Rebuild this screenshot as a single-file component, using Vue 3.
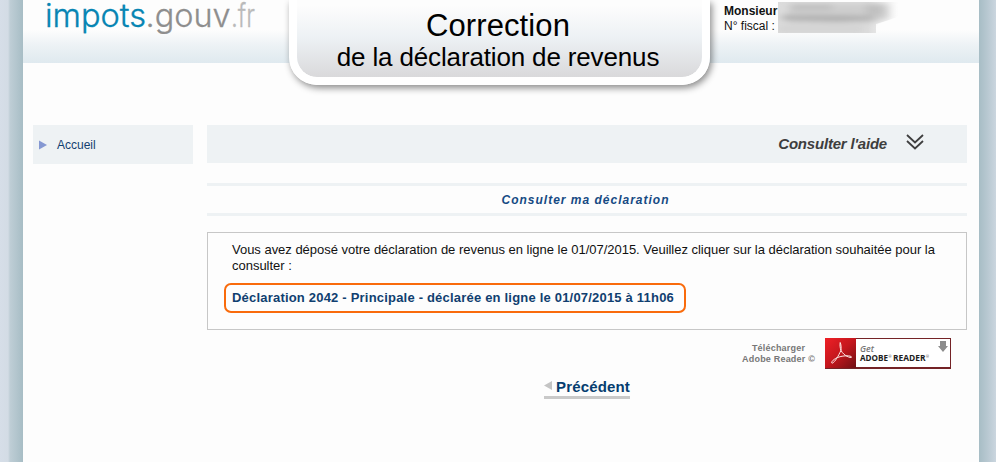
<script setup>
const title = { main: 'Correction', sub: 'de la déclaration de revenus' }
</script>

<template>
  <div class="backdrop">
    <div class="page">
      <header class="header">
        <svg class="logo" width="215" height="40" viewBox="0 0 215 40" role="img" aria-label="impots.gouv.fr">
          <g font-family="Inter, sans-serif" font-size="32" font-weight="300">
            <text x="-1" y="27" textLength="101" lengthAdjust="spacingAndGlyphs" fill="#0785b3" stroke="#0785b3" stroke-width=".35">impots</text>
            <text x="99.5" y="27" textLength="85" lengthAdjust="spacingAndGlyphs" fill="#8e8e8e" stroke="#8e8e8e" stroke-width=".3">.gouv</text>
            <text x="185" y="27" textLength="24" lengthAdjust="spacingAndGlyphs" fill="#bababa" stroke="#bababa" stroke-width=".3">.fr</text>
          </g>
        </svg>
        <h1 class="title">
          <span class="title-main">{{ title.main }}</span>
          <span class="title-sub">{{ title.sub }}</span>
        </h1>
        <div class="user">
          <div class="user-labels"><strong>Monsieur</strong><span>N° fiscal :</span></div>
          <svg class="masked" width="122" height="33" viewBox="0 0 122 33">
            <defs>
              <linearGradient id="fade" x1="0" x2="1"><stop offset=".75" stop-color="#dcdcdc" /><stop offset="1" stop-color="#fdfdfd" /></linearGradient>
              <filter id="soft" x="-20%" y="-50%" width="140%" height="200%"><feGaussianBlur stdDeviation="4 2.5" /></filter>
              <clipPath id="area"><path d="M0 2H120V17L100 24V33H0Z" /></clipPath>
            </defs>
            <g clip-path="url(#area)">
              <path d="M0 2H120V17L98 24V33H0Z" fill="url(#fade)" />
              <g filter="url(#soft)">
                <path d="M10 4H110V18L90 23H10Z" fill="#cecece" />
                <path d="M4 15H63L96 16V20L60 22L4 20Z" fill="#b2b2b2" />
                <path d="M14 4H54V10H14ZM88 4H104V15H88Z" fill="#c0c0c0" />
                <path d="M0 25H85V33H0Z" fill="#d4d4d4" />
              </g>
            </g>
          </svg>
        </div>
      </header>

      <div class="columns">
        <nav class="sidebar">
          <svg width="8" height="10" viewBox="0 0 8 10"><path d="M0 .5 8 5 0 9.5Z" fill="#8598d2" /></svg>
          <a>Accueil</a>
        </nav>

        <main class="content">
          <div class="help">
            <span>Consulter l'aide</span>
            <svg width="18" height="16" viewBox="0 0 18 16" fill="none" stroke="#3e3e3e" stroke-width="1.8">
              <path d="M1 1 9 8.4 17 1M1 7 9 14.4 17 7" />
            </svg>
          </div>

          <h2 class="section">Consulter ma déclaration</h2>

          <section class="panel">
            <p>Vous avez déposé votre déclaration de revenus en ligne le 01/07/2015. Veuillez cliquer sur la déclaration souhaitée pour la consulter :</p>
            <a class="declaration">Déclaration 2042 - Principale - déclarée en ligne le 01/07/2015 à 11h06</a>
          </section>

          <div class="download">
            <div class="download-text">Télécharger<br>Adobe Reader ©</div>
            <svg width="126" height="31" viewBox="0 0 126 31">
              <defs>
                <linearGradient id="red" x1="0" y1="0" x2="1" y2="1">
                  <stop offset="0" stop-color="#ef2026" /><stop offset=".5" stop-color="#c4161d" /><stop offset="1" stop-color="#6f1014" />
                </linearGradient>
              </defs>
              <rect width="126" height="31" fill="#742326" />
              <rect x="31" y="1" width="94" height="28" fill="#fff" />
              <rect width="31" height="30" fill="url(#red)" />
              <path d="M15.2 4.5C14.6 7 15.2 10 15.9 12.5C13.6 17.5 10 24.2 7.2 25.2C5.4 25 8 20.8 14 19C19 17.4 25.8 17.4 26.6 19C26.4 20.6 19 18.2 16 12.5C16.3 9.6 16 6 15.2 4.5Z" fill="none" stroke="#ffe9e7" stroke-width="1" stroke-linejoin="round" />
              <g font-family="'Open Sans', sans-serif">
                <text x="35" y="14" font-size="8.5" font-style="italic" font-weight="600" fill="#777" textLength="14" lengthAdjust="spacingAndGlyphs">Get</text>
                <g font-size="8" font-weight="700" fill="#202020">
                  <text x="35" y="23" textLength="28" lengthAdjust="spacingAndGlyphs">ADOBE</text>
                  <text x="68" y="23" textLength="32.5" lengthAdjust="spacingAndGlyphs">READER</text>
                </g>
                <g font-size="3.5" fill="#333"><text x="63.5" y="20">®</text><text x="101" y="20">®</text></g>
              </g>
              <path d="M115 3H121V8H123L118 14 113 8H115Z" fill="#8c8c8c" />
            </svg>
          </div>

          <div class="back">
            <a>
              <svg width="8" height="9" viewBox="0 0 8 9"><path d="M8 0V9L0 4.5Z" fill="#c4c4c4" /></svg>
              <span>Précédent</span>
            </a>
          </div>
        </main>
      </div>
    </div>
  </div>
</template>

<style>
body { margin: 0; }
</style>

<style scoped>
.backdrop {
  box-sizing: border-box;
  height: 462px;
  padding: 0 17px 0 23px;
  overflow: hidden;
  font-family: "Liberation Sans", Arial, sans-serif;
  background: linear-gradient(90deg, #d6dee8 0, #d3dce5 8px, #bfced6 10px, #a7bdc5 23px, #a7bdc5 979px, #b9c9d2 988px, #cbd6df 996px);
}
.page { height: 462px; background: #fdfdfd; }
.header {
  display: grid;
  grid-template-columns: 266px 421px 1fr;
  align-items: start;
  height: 63px;
  background: linear-gradient(#fdfdfd 30px, #edf2f5 45px, #dfe9ef 63px);
}
.logo { display: block; margin-left: 23px; }
.title {
  box-sizing: border-box;
  display: flex;
  flex-direction: column;
  align-items: center;
  height: 85px;
  margin: 0;
  padding: 8px 3px 0 0;
  border: 8px solid #fff;
  border-top: 0;
  border-radius: 0 0 28px 28px;
  background: linear-gradient(#fdfdfd 5px, #edf1f4 38px, #d9d9db 77px) padding-box;
  box-shadow: 2px 3px 7px rgba(0, 0, 0, .45);
  color: #000;
  font-weight: 400;
  white-space: nowrap;
}
.title-main { font-size: 31px; line-height: 36px; letter-spacing: .1px; }
.title-sub { font-size: 26px; line-height: 27px; letter-spacing: -.15px; }
.user { display: flex; padding-left: 14px; }
.user-labels {
  display: flex;
  flex-direction: column;
  width: 54px;
  padding-top: 4px;
  font-size: 12px;
  line-height: 15px;
  color: #111;
  white-space: nowrap;
}
.masked { display: block; }
.columns { display: flex; align-items: flex-start; gap: 14px; padding: 62px 12px 0 10px; }
.sidebar {
  box-sizing: border-box;
  display: flex;
  align-items: center;
  gap: 10px;
  width: 160px;
  height: 39px;
  padding-left: 6px;
  background: #eef2f4;
  font-size: 12px;
  color: #123f70;
}
.content { width: 760px; }
.help {
  box-sizing: border-box;
  display: flex;
  justify-content: flex-end;
  align-items: center;
  gap: 19px;
  height: 38px;
  padding: 0 43px 4px 0;
  background: #eef2f4;
  font-size: 15px;
  font-style: italic;
  font-weight: 700;
  letter-spacing: -.2px;
  color: #3e3e3e;
}
.help span { padding-top: 2px; }
.section {
  margin: 20px 0 16px;
  padding: 1px 3px 0 0;
  border: solid #eef2f4;
  border-width: 3px 0;
  font-size: 12px;
  font-style: italic;
  line-height: 26px;
  letter-spacing: 1px;
  text-align: center;
  color: #164a83;
}
.panel {
  box-sizing: border-box;
  height: 98px;
  padding: 9px 24px 0 16px;
  border: 1px solid #c7c7c7;
}
.panel p { margin: 0 0 9px 8px; font-size: 13px; line-height: 16px; letter-spacing: -.02px; color: #111; }
.declaration {
  box-sizing: border-box;
  display: block;
  width: 462px;
  height: 30px;
  padding-left: 6px;
  border: 2px solid #f96b0c;
  border-radius: 7px;
  font-size: 13px;
  font-weight: 700;
  line-height: 25px;
  letter-spacing: .2px;
  white-space: nowrap;
  color: #103f70;
}
.download { display: flex; justify-content: flex-end; gap: 10px; padding: 8px 16px 0 0; }
.download-text {
  padding-top: 5px;
  font-size: 9px;
  font-weight: 700;
  line-height: 11px;
  letter-spacing: .2px;
  text-align: center;
  color: #777;
}
.download svg { display: block; }
.back { display: flex; justify-content: center; padding-top: 9px; }
.back a {
  display: flex;
  gap: 4px;
  border-bottom: 3px solid #c9c9c9;
  font-size: 15px;
  font-weight: 700;
  line-height: 18px;
  letter-spacing: .15px;
  color: #063e70;
}
.back svg { margin-top: 3px; }
</style>
